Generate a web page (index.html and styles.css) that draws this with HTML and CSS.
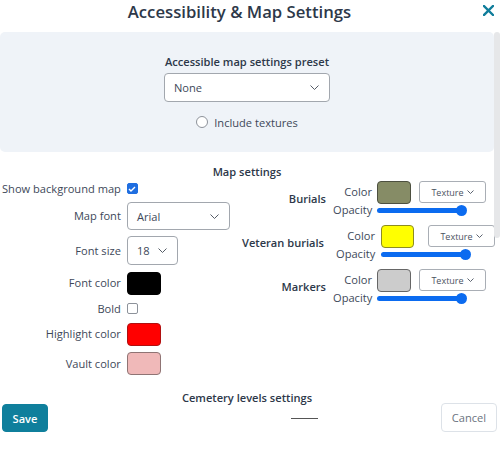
FILE: index.html
```html
<!DOCTYPE html>
<html lang="en">
<head>
<meta charset="utf-8">
<title>Accessibility &amp; Map Settings</title>
<link rel="stylesheet" href="styles.css">
</head>
<body>
<div class="dialog">
  <header class="dialog-header">
    <h1 class="dialog-title">Accessibility &amp; Map Settings</h1>
    <button class="close-btn" aria-label="Close">
      <svg width="11" height="11" viewBox="0 0 11 11"><path d="M1 1 L10 10 M10 1 L1 10" stroke="#107d9b" stroke-width="2.4" stroke-linecap="square"/></svg>
    </button>
  </header>

  <div class="dialog-body">
    <section class="preset-panel">
      <h2 class="section-title">Accessible map settings preset</h2>
      <div class="select select--preset">
        <span>None</span>
        <svg class="chev" width="9" height="5" viewBox="0 0 9 5"><path d="M0.5 0.5 L4.5 4.5 L8.5 0.5" fill="none" stroke="#555c66" stroke-width="1"/></svg>
      </div>
      <label class="check-row">
        <span class="checkbox checkbox--round"></span>
        <span>Include textures</span>
      </label>
    </section>

    <h2 class="section-title map-title">Map settings</h2>

    <div class="map-settings">
      <div class="left-grid">
        <span class="lbl">Show background map</span>
        <span class="ctl"><span class="checkbox checkbox--checked"><svg width="8" height="6" viewBox="0 0 8 6"><path d="M1 3 L3 5 L7 1" fill="none" stroke="#fff" stroke-width="1.4"/></svg></span></span>

        <span class="lbl">Map font</span>
        <span class="ctl"><span class="select select--font"><span>Arial</span><svg class="chev" width="9" height="5" viewBox="0 0 9 5"><path d="M0.5 0.5 L4.5 4.5 L8.5 0.5" fill="none" stroke="#555c66" stroke-width="1"/></svg></span></span>

        <span class="lbl">Font size</span>
        <span class="ctl"><span class="select select--size"><span>18</span><svg class="chev" width="9" height="5" viewBox="0 0 9 5"><path d="M0.5 0.5 L4.5 4.5 L8.5 0.5" fill="none" stroke="#555c66" stroke-width="1"/></svg></span></span>

        <span class="lbl">Font color</span>
        <span class="ctl"><span class="swatch swatch--black"></span></span>

        <span class="lbl">Bold</span>
        <span class="ctl"><span class="checkbox"></span></span>

        <span class="lbl">Highlight color</span>
        <span class="ctl"><span class="swatch swatch--red"></span></span>

        <span class="lbl">Vault color</span>
        <span class="ctl"><span class="swatch swatch--pink"></span></span>
      </div>

      <div class="right-col">
        <div class="group">
          <span class="group-name">Burials</span>
          <div class="group-grid">
            <span class="sub-lbl">Color</span>
            <span class="color-line"><span class="swatch swatch--olive"></span><button class="texture-btn">Texture<svg width="7" height="4" viewBox="0 0 7 4"><path d="M0.5 0.5 L3.5 3.5 L6.5 0.5" fill="none" stroke="#4a5261" stroke-width="0.9"/></svg></button></span>
            <span class="sub-lbl">Opacity</span>
            <span class="slider"><span class="thumb"></span></span>
          </div>
        </div>
        <div class="group group--wide">
          <span class="group-name">Veteran burials</span>
          <div class="group-grid">
            <span class="sub-lbl">Color</span>
            <span class="color-line"><span class="swatch swatch--yellow"></span><button class="texture-btn">Texture<svg width="7" height="4" viewBox="0 0 7 4"><path d="M0.5 0.5 L3.5 3.5 L6.5 0.5" fill="none" stroke="#4a5261" stroke-width="0.9"/></svg></button></span>
            <span class="sub-lbl">Opacity</span>
            <span class="slider"><span class="thumb"></span></span>
          </div>
        </div>
        <div class="group">
          <span class="group-name">Markers</span>
          <div class="group-grid">
            <span class="sub-lbl">Color</span>
            <span class="color-line"><span class="swatch swatch--gray"></span><button class="texture-btn">Texture<svg width="7" height="4" viewBox="0 0 7 4"><path d="M0.5 0.5 L3.5 3.5 L6.5 0.5" fill="none" stroke="#4a5261" stroke-width="0.9"/></svg></button></span>
            <span class="sub-lbl">Opacity</span>
            <span class="slider"><span class="thumb"></span></span>
          </div>
        </div>
      </div>
    </div>

    <h2 class="section-title levels-title">Cemetery levels settings</h2>
    <div class="levels">
      <div class="levels-rule"></div>
    </div>
  </div>

  <div class="scroll-thumb"></div>

  <footer class="dialog-footer">
    <button class="btn btn--primary">Save</button>
    <button class="btn btn--secondary">Cancel</button>
  </footer>
</div>
</body>
</html>
```

FILE: styles.css
```css
* { box-sizing: border-box; }

html, body {
  margin: 0;
  padding: 0;
  background: #ffffff;
}

body {
  font-family: "Open Sans", "Noto Sans", sans-serif;
  color: #3d4859;
}

.dialog {
  position: relative;
  width: 500px;
  height: 460px;
  overflow: hidden;
  background: #fff;
}

.dialog-header {
  height: 32px;
  display: flex;
  align-items: flex-start;
  padding-right: 3px;
}

.dialog-title {
  flex: 1;
  margin: 0;
  text-align: center;
  font-size: 16.7px;
  line-height: 24px;
  font-weight: 600;
  color: #2d3849;
}

.close-btn {
  border: 0;
  background: none;
  padding: 0;
  margin-top: 5px;
  width: 18px;
  height: 11px;
  display: flex;
  justify-content: center;
  cursor: pointer;
}

.dialog-body {
  height: 388px;
  overflow: hidden;
}

.scroll-thumb {
  position: absolute;
  top: 32px;
  right: 0;
  width: 6px;
  height: 206px;
  border-radius: 3px;
  background: #e6e7e9;
}

.preset-panel {
  background: #eff3f8;
  border-radius: 5px;
  height: 120px;
  margin-right: 6px;
  padding-top: 21px;
  display: flex;
  flex-direction: column;
  align-items: center;
}

.section-title {
  margin: 0;
  font-size: 11.1px;
  line-height: 18px;
  font-weight: 600;
  color: #2d3849;
  text-align: center;
}

.select {
  display: flex;
  align-items: center;
  justify-content: space-between;
  background: #fff;
  border: 1px solid #a2a7ae;
  border-radius: 4px;
  font-size: 11.1px;
  color: #3d4859;
}

.select--preset {
  margin-top: 2px;
  width: 166px;
  height: 29px;
  padding: 0 10px 0 9px;
}

.select--font {
  width: 103px;
  height: 28px;
  padding: 0 10px 0 9px;
}

.select--size {
  width: 51px;
  height: 29px;
  padding: 0 10px 0 9px;
}

.chev { display: block; }

.check-row {
  margin-top: 11px;
  height: 18px;
  display: flex;
  align-items: center;
  gap: 6px;
  font-size: 11.1px;
  color: #3d4859;
}

.checkbox {
  display: inline-flex;
  align-items: center;
  justify-content: center;
  width: 11px;
  height: 11px;
  border: 1px solid #8d929a;
  border-radius: 2px;
  background: #fff;
}

.checkbox--round {
  width: 12px;
  height: 12px;
  border-radius: 6px;
}

.checkbox--checked {
  background: #1f6ee0;
  border-color: #1f6ee0;
}

.map-title {
  margin-top: 11px;
  margin-right: 6px;
}

.map-settings {
  display: flex;
}

.left-grid {
  width: 240px;
  padding-left: 2px;
  display: grid;
  grid-template-columns: max-content max-content;
  grid-template-rows: 15px 28px 29px 24px 15px 24px 23px;
  column-gap: 6px;
  row-gap: 6px;
  align-items: center;
  font-size: 11.1px;
}

.lbl {
  text-align: right;
  line-height: 16px;
  white-space: nowrap;
}

.ctl {
  display: flex;
  align-items: center;
}

.swatch {
  display: inline-block;
  width: 34px;
  height: 23px;
  border-radius: 4px;
  border: 1px solid #444;
}

.swatch--black { background: #000; border-color: #000; }
.swatch--red { background: #ff0000; border-color: #b01010; }
.swatch--pink { background: #f0b9b9; border-color: #8f7474; }
.swatch--olive { background: #868c66; border-color: #4d5040; }
.swatch--yellow { background: #ffff00; border-color: #8c8c22; width: 33px; }
.swatch--gray { background: #cccccc; border-color: #666; }

.right-col {
  flex: 1;
  display: flex;
  flex-direction: column;
  gap: 9px;
}

.group {
  display: flex;
  align-items: center;
  height: 35px;
  gap: 7px;
}

.group-name {
  width: 86px;
  text-align: right;
  font-size: 11.1px;
  font-weight: 600;
  color: #2d3849;
  white-space: nowrap;
}

.group-grid {
  display: grid;
  grid-template-columns: 39px max-content;
  grid-template-rows: 22px 12px;
  column-gap: 5px;
  row-gap: 1px;
  align-items: center;
}

.sub-lbl {
  text-align: right;
  font-size: 11.1px;
  line-height: 14px;
  white-space: nowrap;
}

.color-line {
  display: flex;
  align-items: center;
  gap: 8px;
}

.texture-btn {
  display: flex;
  align-items: center;
  justify-content: center;
  gap: 3px;
  width: 67px;
  height: 22px;
  padding: 0;
  border: 1px solid #a9aeb5;
  border-radius: 3px;
  background: #fff;
  font-family: "Open Sans", sans-serif;
  font-size: 9px;
  color: #4a5261;
}

.texture-btn svg { display: block; }

.slider {
  position: relative;
  display: block;
  width: 89px;
  height: 5px;
  border-radius: 3px;
  background: #0b6bf0;
}

.thumb {
  position: absolute;
  right: -1px;
  top: -3px;
  width: 11px;
  height: 11px;
  border-radius: 50%;
  background: #0b6bf0;
}

.group--wide { gap: 12px; }
.group--wide .group-name { width: 84px; }
.group--wide .group-grid { column-gap: 6px; }
.group--wide .color-line { gap: 14px; }

.levels-title {
  margin-top: 14px;
  margin-right: 6px;
}

.levels {
  height: 330px;
  padding-top: 11px;
  padding-left: 291px;
  display: flex;
}

.levels-rule {
  width: 27px;
  border-top: 1px solid #555;
  height: 1px;
}

.dialog-footer {
  position: absolute;
  left: 0;
  right: 0;
  bottom: 28px;
  display: flex;
  justify-content: space-between;
  align-items: flex-end;
  padding: 0 3px 0 2px;
}

.btn {
  height: 29px;
  border-radius: 4px;
  font-family: "Open Sans", sans-serif;
  font-size: 11.1px;
  padding: 0;
  cursor: pointer;
}

.btn--primary {
  width: 46px;
  height: 28px;
  background: #0f7f9c;
  border: 1px solid #0f7f9c;
  color: #fff;
  font-weight: 600;
}

.btn--secondary {
  width: 56px;
  background: #fff;
  border: 1px solid #dde2e8;
  color: #6b7380;
}
```
